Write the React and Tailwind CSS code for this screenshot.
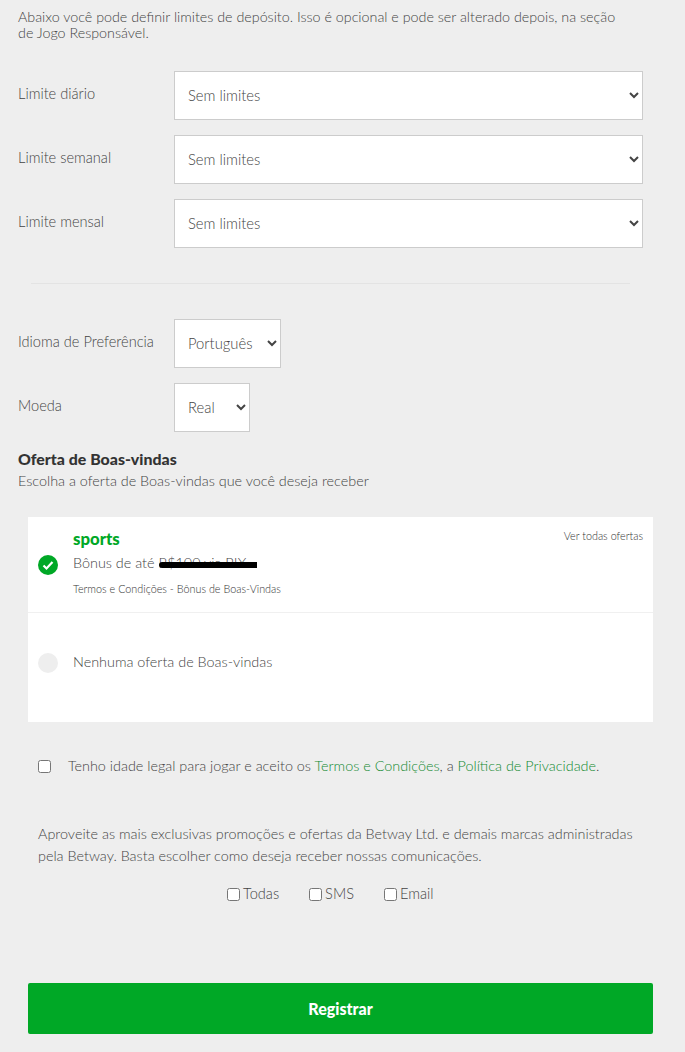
import React from 'react';

const Row = ({ label, width, value }) => (
  <div className="flex items-start mb-[15px]">
    <label className="w-[156px] pt-[14px] leading-[18px] text-[14.6px] text-[#444]">{label}</label>
    <select className={`${width} h-[49px] pl-[9px] pr-[4px] pb-[2px] bg-white border border-[#ccc] text-[14.8px] text-[#444]`}>
      <option>{value}</option>
    </select>
  </div>
);

const App = () => {
  return (
    <div className="h-[1052px] overflow-hidden bg-[#eeeeee] font-['Lato',sans-serif] font-light text-[#444]">
      <div className="pl-[18px] pr-[42px]">
        {/* Limites de depósito */}
        <p className="pt-[9px] pr-[18px] h-[71px] text-[14.3px] leading-[16px]">
          Abaixo você pode definir limites de depósito. Isso é opcional e pode ser alterado depois, na seção de Jogo Responsável.
        </p>
        <Row label="Limite diário" width="w-[469px]" value="Sem limites" />
        <Row label="Limite semanal" width="w-[469px]" value="Sem limites" />
        <Row label="Limite mensal" width="w-[469px]" value="Sem limites" />
      </div>

      <div className="ml-[31px] mr-[55px] mt-[35px] mb-[35px] h-px bg-[#e3e3e3]" />

      <div className="pl-[18px]">
        <Row label="Idioma de Preferência" width="w-[107px]" value="Português" />
        <Row label="Moeda" width="w-[76px]" value="Real" />
        <h3 className="mt-[17px] text-[15.9px] leading-[20px] font-black text-[#333]">Oferta de Boas-vindas</h3>
        <p className="mt-[2px] text-[14.4px] leading-[20px]">Escolha a oferta de Boas-vindas que você deseja receber</p>
      </div>

      {/* Ofertas */}
      <div className="ml-[28px] mt-[26px] w-[625px] bg-white">
        <div className="relative h-[96px] border-b border-[#f0f0f0] flex items-center pl-[10px]">
          <svg width="20" height="20" viewBox="0 0 20 20" className="shrink-0">
            <circle cx="10" cy="10" r="10" fill="#00a826" />
            <path d="M5.5 10.5l3 3 6-6.5" fill="none" stroke="#fff" strokeWidth="2.2" />
          </svg>
          <div className="ml-[15px] -mt-[1px]">
            <div className="-mt-[3px] text-[16.8px] leading-[20px] font-black text-[#00a826]">sports</div>
            <div className="relative mt-[4px] text-[14.4px] leading-[20px]">
              Bônus de até R$100 via PIX
              <span className="absolute left-[86px] top-[9px] w-[98px] h-[6px] bg-black rounded-l-full" />
            </div>
            <div className="mt-[9px] text-[10.8px] leading-[14px] text-[#333]">Termos e Condições - Bônus de Boas-Vindas</div>
          </div>
          <a className="absolute right-[10px] top-[12px] text-[10.8px] leading-[14px] text-[#333]">Ver todas ofertas</a>
        </div>
        <div className="h-[109px] flex items-start pt-[39px] pl-[10px]">
          <span className="mt-[1px] w-[20px] h-[20px] rounded-full bg-[#eeeeee] shrink-0" />
          <span className="ml-[15px] text-[14.4px] leading-[20px]">Nenhuma oferta de Boas-vindas</span>
        </div>
      </div>

      {/* Termos */}
      <div className="mt-[34px] pl-[38px] flex items-center h-[20px] text-[14.4px]">
        <input type="checkbox" className="w-[13px] h-[13px] m-0" />
        <span className="ml-[17px]">
          Tenho idade legal para jogar e aceito os <a className="text-[#128a30]">Termos e Condições</a>, a <a className="text-[#128a30]">Política de Privacidade</a>.
        </span>
      </div>

      {/* Comunicações */}
      <p className="mt-[47px] pl-[38px] pr-[48px] text-[14.4px] leading-[22px]">
        Aproveite as mais exclusivas promoções e ofertas da Betway Ltd. e demais marcas administradas pela Betway. Basta escolher como deseja receber nossas comunicações.
      </p>
      <div className="mt-[17px] pl-[227px] flex gap-[30px] h-[20px] text-[14.6px]">
        {['Todas', 'SMS', 'Email'].map((item) => (
          <label key={item} className="flex items-center gap-[3px]">
            <input type="checkbox" className="w-[13px] h-[13px] m-0" />
            {item}
          </label>
        ))}
      </div>

      <button className="block ml-[28px] mt-[79px] w-[625px] h-[51px] rounded-[2px] bg-[#00a826] text-white text-[16px] font-black">
        Registrar
      </button>
    </div>
  );
};

export default App;
